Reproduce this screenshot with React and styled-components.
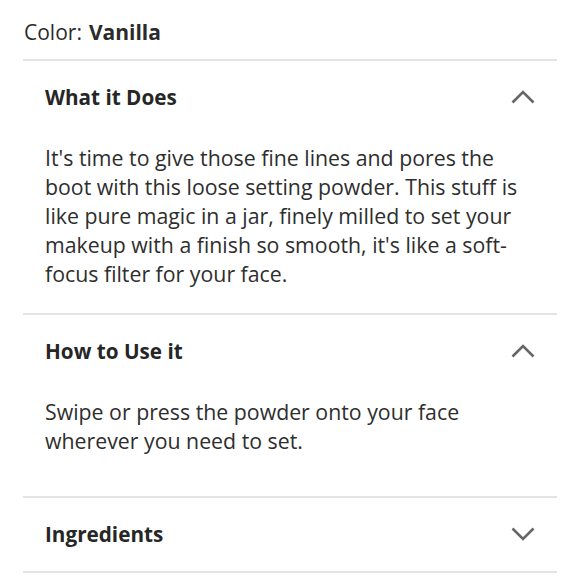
import React from "react";
import styled, { createGlobalStyle } from "styled-components";

const GlobalStyle = createGlobalStyle`
  body {
    margin: 0;
    background: #ffffff;
    font-family: "Open Sans", Lato, sans-serif;
    color: #2e2e2e;
  }
`;

const Page = styled.div`
  width: 534px;
  margin-left: 23px;
`;

const ColorRow = styled.div`
  height: 59px;
  display: flex;
  align-items: center;
  padding-top: 4px;
  box-sizing: border-box;
  font-size: 21px;
  color: #2b2b2b;
  margin-left: 1px;

  b {
    font-weight: 700;
    margin-left: 7px;
  }
`;

const Section = styled.section`
  border-top: 2px solid #e4e4e4;
  border-bottom: ${p => (p.last ? "2px solid #e4e4e4" : "none")};
`;

const Header = styled.div`
  height: 73px;
  box-sizing: border-box;
  display: flex;
  align-items: center;
  justify-content: space-between;
  padding: 0 22px 2px;
`;

const Title = styled.h3`
  margin: 0;
  font-size: 20.7px;
  line-height: 24px;
  font-weight: 700;
  color: #262626;
`;

const Body = styled.p`
  margin: 0;
  padding: 9px 22px ${p => p.bottom}px;
  font-size: 21.3px;
  line-height: 29px;
  color: #2e2e2e;
  white-space: nowrap;
`;

const Chevron = ({ open }) => (
  <svg width="24" height="14" viewBox="0 0 24 14" fill="none">
    <path
      d={open ? "M1.5 12.5 L12 2 L22.5 12.5" : "M1.5 1.5 L12 12 L22.5 1.5"}
      stroke="#666666"
      strokeWidth="2.6"
    />
  </svg>
);

const Accordion = ({ title, open, last, bottom, children }) => (
  <Section last={last}>
    <Header>
      <Title>{title}</Title>
      <Chevron open={open} />
    </Header>
    {open && <Body bottom={bottom}>{children}</Body>}
  </Section>
);

export default function App() {
  return (
    <>
      <GlobalStyle />
      <Page>
        <ColorRow>
          Color: <b>Vanilla</b>
        </ColorRow>
        <Accordion title="What it Does" open bottom={25}>
          It's time to give those fine lines and pores the
          <br />
          boot with this loose setting powder. This stuff is
          <br />
          like pure magic in a jar, finely milled to set your
          <br />
          makeup with a finish so smooth, it's like a soft-
          <br />
          focus filter for your face.
        </Accordion>
        <Accordion title="How to Use it" open bottom={41}>
          Swipe or press the powder onto your face
          <br />
          wherever you need to set.
        </Accordion>
        <Accordion title="Ingredients" last />
      </Page>
    </>
  );
}
